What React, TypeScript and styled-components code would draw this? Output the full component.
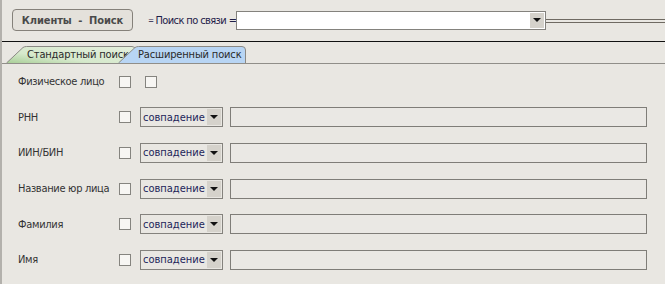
import React from "react";
import styled, { createGlobalStyle } from "styled-components";

const Global = createGlobalStyle`
  html, body { margin: 0; padding: 0; background: #e9e7e2; }
  body { font-family: "DejaVu Sans Condensed", "DejaVu Sans", sans-serif; }
`;

const Page = styled.div`
  width: 663px;
  height: 284px;
  background: #e9e7e2;
  border-left: 2px solid #b3b1ac;
  overflow: hidden;
  display: flex;
  flex-direction: column;
`;

const TopBar = styled.div`
  height: 41px;
  display: flex;
  align-items: center;
  padding-left: 10px;
  padding-bottom: 1px;
  box-sizing: border-box;
`;

const TitleButton = styled.div`
  width: 121px;
  height: 22px;
  box-sizing: border-box;
  border: 1px solid #85817a;
  border-radius: 4px;
  background: #e4e1db;
  display: flex;
  align-items: center;
  justify-content: center;
  font-weight: bold;
  font-size: 11px;
  color: #4a4a4a;
  white-space: pre;
  letter-spacing: -0.1px;
`;

const LinkLabel = styled.div`
  margin-left: 15px;
  font-size: 11px;
  letter-spacing: -0.6px;
  color: #1e2048;
  display: flex;
  align-items: center;
  white-space: pre;
`;

const Eq = styled.span`
  font-size: 8px;
  margin-right: 2px;
`;

const ComboBox = styled.div<{ $bg: string; $w: number; $h: number }>`
  width: ${(p) => p.$w}px;
  height: ${(p) => p.$h}px;
  box-sizing: border-box;
  border: 1px solid #84827d;
  background: ${(p) => p.$bg};
  display: flex;
  align-items: stretch;
  padding: 1px;
  flex-shrink: 0;
`;

const ComboText = styled.div`
  flex: 1;
  font-size: 11px;
  color: #1d1f5a;
  display: flex;
  align-items: center;
  padding-left: 1px;
`;

const ArrowButton = styled.div`
  width: 14px;
  background: #d5d2cb;
  display: flex;
  align-items: center;
  justify-content: center;
`;

const Arrow = styled.div`
  width: 0;
  height: 0;
  border-left: 4px solid transparent;
  border-right: 4px solid transparent;
  border-top: 4px solid #111;
`;

const DoubleRule = styled.div`
  flex: 1;
  height: 2px;
  border-top: 1px solid #6f6a62;
  border-bottom: 1px solid #6f6a62;
  margin-top: 1px;
`;

const BlackRule = styled.div`
  height: 1px;
  background: #111;
`;

const TabStrip = styled.div`
  height: 21px;
  border-bottom: 1px solid #908e89;
  display: flex;
  align-items: flex-end;
  padding-left: 4px;
`;

const Tab = styled.div<{ $w: number; $overlap: number; $pad: number }>`
  position: relative;
  width: ${(p) => p.$w}px;
  height: 17px;
  margin-left: ${(p) => -p.$overlap}px;
  padding-left: ${(p) => p.$pad}px;
  box-sizing: border-box;
  font-size: 11px;
  letter-spacing: -0.15px;
  color: #2a2a2a;
  display: flex;
  align-items: center;
  white-space: nowrap;
  overflow: hidden;
  flex-shrink: 0;
  & > span {
    position: relative;
  }
`;

const TabShape = styled.svg`
  position: absolute;
  left: 0;
  top: 0;
`;

const Form = styled.div`
  display: grid;
  grid-auto-rows: 35.6px;
  padding-left: 16px;
`;

const Row = styled.div`
  display: flex;
  align-items: center;
`;

const Label = styled.div`
  width: 101px;
  font-size: 11px;
  letter-spacing: -0.3px;
  color: #333;
  white-space: nowrap;
`;

const Check = styled.div<{ $gap?: number }>`
  width: 12px;
  height: 12px;
  box-sizing: border-box;
  border: 1px solid #85847f;
  background: #f7f6f3;
  margin-right: ${(p) => p.$gap ?? 0}px;
  flex-shrink: 0;
`;

const TextBox = styled.div`
  width: 417px;
  height: 20px;
  box-sizing: border-box;
  border: 1px solid #7f7d78;
  background: #eae8e4;
  margin-left: 7px;
`;

const rows = ["РНН", "ИИН/БИН", "Название юр лица", "Фамилия", "Имя"];

function TabBg({ w, fill }: { w: number; fill: string }) {
  return (
    <TabShape width={w} height={17} viewBox={`0 0 ${w} 17`}>
      <defs>
        <linearGradient id="gr" x1="0" y1="1" x2="1" y2="0">
          <stop offset="0" stopColor="#a9cf98" />
          <stop offset="0.35" stopColor="#d6e9cc" />
          <stop offset="1" stopColor="#e4efdd" />
        </linearGradient>
      </defs>
      <path
        d={`M0.5 17 L17 1.5 Q18.5 0.5 20.5 0.5 L${w - 4} 0.5 Q${w - 0.5} 0.5 ${w - 0.5} 4 L${w - 0.5} 17`}
        fill={fill}
        stroke="#8b8984"
        strokeWidth="1"
      />
    </TabShape>
  );
}

export default function App() {
  return (
    <>
      <Global />
      <Page>
        <TopBar>
          <TitleButton>{"Клиенты  -  Поиск"}</TitleButton>
          <LinkLabel>
            <Eq>=</Eq>Поиск по связи =
          </LinkLabel>
          <ComboBox $bg="#ffffff" $w={310} $h={19}>
            <ComboText />
            <ArrowButton>
              <Arrow />
            </ArrowButton>
          </ComboBox>
          <DoubleRule />
        </TopBar>
        <BlackRule />
        <TabStrip>
          <Tab $w={130} $overlap={0} $pad={21}>
            <TabBg w={130} fill="url(#gr)" />
            <span>Стандартный поиск</span>
          </Tab>
          <Tab $w={128} $overlap={18} $pad={20}>
            <TabBg w={128} fill="#b8d5f4" />
            <span>Расширенный поиск</span>
          </Tab>
        </TabStrip>
        <Form>
          <Row>
            <Label>Физическое лицо</Label>
            <Check $gap={14} />
            <Check />
          </Row>
          {rows.map((r) => (
            <Row key={r}>
              <Label>{r}</Label>
              <Check $gap={9} />
              <ComboBox $bg="#e9e7e2" $w={83} $h={20}>
                <ComboText>совпадение</ComboText>
                <ArrowButton>
                  <Arrow />
                </ArrowButton>
              </ComboBox>
              <TextBox />
            </Row>
          ))}
        </Form>
      </Page>
    </>
  );
}
